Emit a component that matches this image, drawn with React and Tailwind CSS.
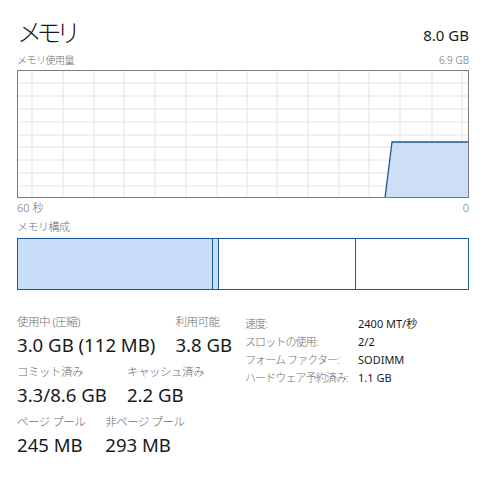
export default function App() {
  const vLines = [14, 45, 76, 106, 137, 168, 199, 229, 259, 290, 321, 351, 382, 414, 444];
  const hLines = [12, 25, 38, 51, 64, 76, 89, 102, 115];

  const stats = [
    [
      { label: "使用中 (圧縮)", value: "3.0 GB (112 MB)" },
      { label: "利用可能", value: "3.8 GB" },
    ],
    [
      { label: "コミット済み", value: "3.3/8.6 GB" },
      { label: "キャッシュ済み", value: "2.2 GB" },
    ],
    [
      { label: "ページ プール", value: "245 MB" },
      { label: "非ページ プール", value: "293 MB" },
    ],
  ];

  const details = [
    ["速度:", "2400 MT/秒"],
    ["スロットの使用:", "2/2"],
    ["フォーム ファクター:", "SODIMM"],
    ["ハードウェア予約済み:", "1.1 GB"],
  ];

  return (
    <div
      className="w-[490px] h-[478px] bg-white pl-[17px] pr-[21px] pt-[14px] text-[#1a1a1a] overflow-hidden"
      style={{ fontFamily: '"Noto Sans", "Noto Sans CJK JP", sans-serif' }}
    >
      {/* header */}
      <div className="flex items-end justify-between h-[36px]">
        <div className="text-[25px] leading-[36px] tracking-[-5.5px] font-light">メモリ</div>
        <div className="text-[15px] leading-[20px] mb-[5px]">8.0 GB</div>
      </div>

      <div className="flex justify-between items-center h-[20px] text-[10px] text-[#6e6e6e] font-light">
        <span className="tracking-[-0.5px]">メモリ使用量</span>
        <span>6.9 GB</span>
      </div>

      {/* usage graph */}
      <div className="border border-[#7b7b7b] h-[128px]">
        <svg width="100%" height="100%" viewBox="0 0 450 126" preserveAspectRatio="none" className="block">
          {vLines.map((x) => (
            <line key={"v" + x} x1={x} y1="0" x2={x} y2="126" stroke="#e3e3e3" strokeWidth="1" />
          ))}
          {hLines.map((y) => (
            <line key={"h" + y} x1="0" y1={y} x2="450" y2={y} stroke="#e3e3e3" strokeWidth="1" />
          ))}
          <polygon points="367,127 374,71 451,71 451,127" fill="#c6dcf6" fillOpacity="0.9" />
          <polyline points="367,127 374,71 451,71" fill="none" stroke="#1e5a91" strokeWidth="1.3" />
        </svg>
      </div>

      <div className="flex justify-between items-center h-[21px] text-[11px] text-[#6e6e6e] font-light">
        <span>60 秒</span>
        <span>0</span>
      </div>
      <div className="h-[16px] leading-[16px] text-[11px] text-[#6e6e6e] font-light tracking-[-0.5px]">メモリ構成</div>

      {/* composition bar */}
      <div className="mt-[3px] flex h-[52px] border border-[#1e5a91]">
        <div className="w-[195px] bg-[#c8def8] border-r border-[#1e5a91]" />
        <div className="w-[6px] bg-[#c8def8] border-r border-[#1e5a91]" />
        <div className="w-[137px] border-r border-[#1e5a91]" />
        <div className="flex-1" />
      </div>

      {/* stats */}
      <div className="flex mt-[22px]">
        <div className="w-[228px] flex flex-col">
          {stats.map((row, i) => (
            <div key={i} className="flex gap-[20px] mb-[4px]">
              {row.map((s) => (
                <div key={s.label} className="flex flex-col">
                  <span className="text-[11.5px] leading-[20px] text-[#6e6e6e] font-light tracking-[-0.5px]">{s.label}</span>
                  <span className="text-[18.6px] leading-[26px] whitespace-nowrap">{s.value}</span>
                </div>
              ))}
            </div>
          ))}
        </div>
        <div className="flex flex-col pt-[3px]">
          {details.map(([k, v]) => (
            <div key={k} className="flex h-[18px] items-center text-[11px]">
              <span className="w-[113px] text-[#6e6e6e] whitespace-nowrap font-light tracking-[-0.9px]">{k}</span>
              <span className="whitespace-nowrap">{v}</span>
            </div>
          ))}
        </div>
      </div>
    </div>
  );
}
